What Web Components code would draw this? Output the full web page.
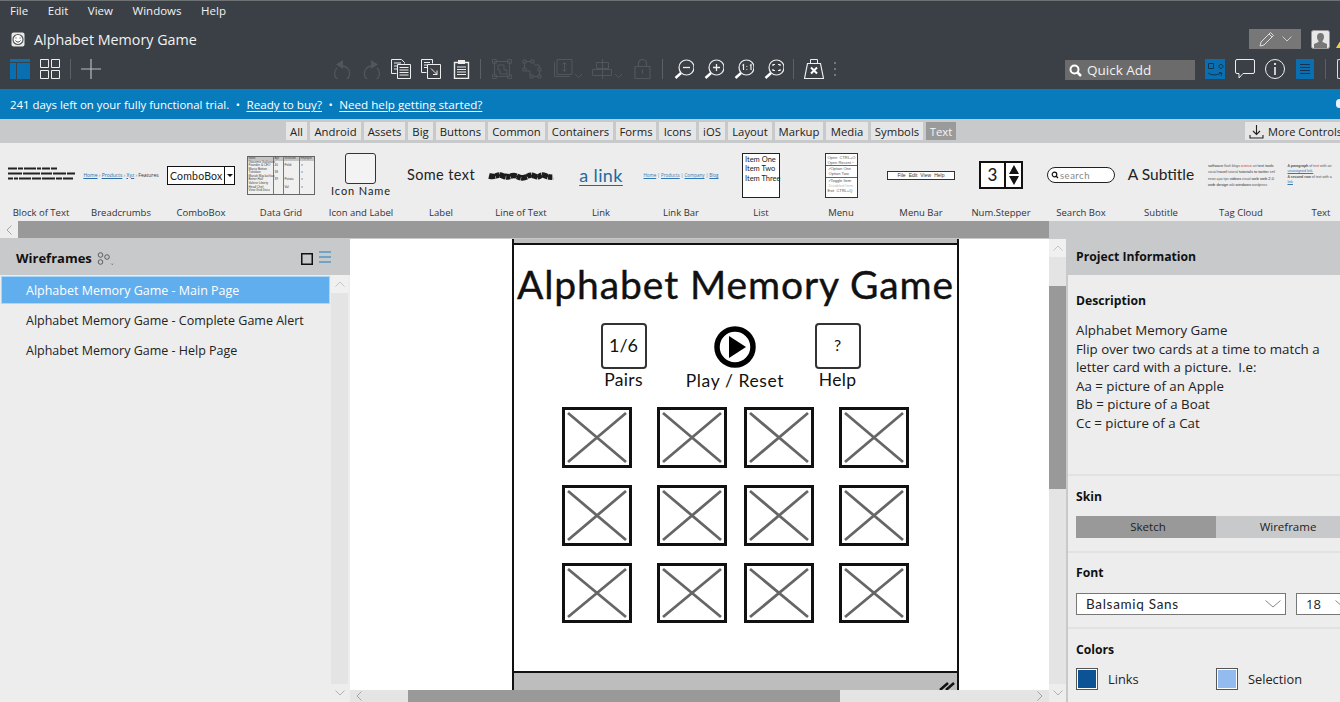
<!DOCTYPE html>
<html>
<head>
<meta charset="utf-8">
<title>Alphabet Memory Game</title>
<style>
  html, body { margin: 0; height: 100%; overflow: hidden; }
  body { font-family: "Open Sans", "Liberation Sans", sans-serif; font-size: 12.5px; color: #222; }
</style>
</head>
<body>
<bm-app></bm-app>

<script>
const DIM = '#50565b';
const svg = (w, h, body) => `<svg width="${w}" height="${h}" viewBox="0 0 ${w} ${h}" fill="none" style="display:block;flex:none">${body}</svg>`;

const ICONS = {
  layout: svg(20, 20, `<rect width="20" height="20" fill="#0a6fb0"/><path d="M0 3.5H20M6.5 3.5V20" stroke="#3a4046"/>`),
  grid: svg(20, 20, `<path d="M.5.5h8v8h-8zM11.5.5h8v8h-8zM.5 11.5h8v8h-8zM11.5 11.5h8v8h-8z" stroke="#eee"/>`),
  plus: svg(20, 20, `<path d="M10 0V20M0 10H20" stroke="#b8bbbd" stroke-width="1.2"/>`),
  undo: svg(18, 20, `<path d="M4 9a7.5 7.5 0 1 0 5-2" stroke="${DIM}" stroke-width="1.3"/><path d="M10 1v9L3 5.5z" fill="${DIM}"/>`),
  redo: svg(18, 20, `<path d="M14 9a7.5 7.5 0 1 1-5-2" stroke="${DIM}" stroke-width="1.3"/><path d="M8 1v9l7-4.5z" fill="${DIM}"/>`),
  copy: svg(20, 20, `<path d="M.5.5h10l3 3v1M.5.5v14h5" stroke="#eee"/><path d="M3 4h7M3 7h3M3 10h3" stroke="#eee"/><path d="M6.500 5.500h13v14h-13z" fill="#3a4046" stroke="#eee"/><path d="M8.500 8.500h9M8.500 11h9M8.500 13.500h9M8.500 16h9" stroke="#eee"/>`),
  paste: svg(20, 20, `<path d="M.5.500h11v4M.5.500v13h5M3 3.500h6M3 6h3M3 8.500h3" stroke="#eee"/><path d="M6.500 5.500h13v14h-13z" stroke="#eee"/><path d="M10 9.500l6 6M16 11.500v4h-4" stroke="#eee"/>`),
  clipboard: svg(17, 20, `<path d="M1.500 3.500h14v16h-14z" stroke="#eee" stroke-width="1.400"/><path d="M5 1h7v4H5z" fill="#eee"/><path d="M4 8h9M4 10.500h9M4 13h9M4 15.500h9" stroke="#eee"/>`),
  group: svg(20, 20, `<path d="M2.500 2.500h15v15h-15z" stroke="${DIM}"/><path d="M0 0h4v4H0zM16 0h4v4h-4zM0 16h4v4H0zM16 16h4v4h-4z" stroke="${DIM}" transform="translate(.5 .5) scale(.95)"/><path d="M6 6h6v5h3v4H8v-4H6z" stroke="${DIM}"/>`),
  ungroup: svg(20, 20, `<path d="M1 1h3v3H1zM9 1h3v3H9zM1 9h3v3H1zM16 9h3v3h-3zM8 16h3v3H8zM16 16h3v3h-3z" stroke="${DIM}"/><path d="M4 2.500h5M2.500 4v5M12 6h5v3M4 12h4v4M11 17.500h5M17.500 12v4" stroke="${DIM}"/>`),
  arrange: svg(30, 20, `<path d="M5 .5h15v15H5zM2.500 3v14.500H18" stroke="${DIM}"/><path d="M12.500 3.500v9M10.500 5.500l2-2 2 2M10.500 10.500l2 2 2-2" stroke="${DIM}"/><path d="M23 15l3.500 3.500L30 15" stroke="${DIM}"/>`),
  align: svg(30, 20, `<path d="M10.500 0v20M4.500 3.500h12v6h-12zM.5 10.500h19v6H.5z" stroke="${DIM}"/><path d="M23 15l3.500 3.500L30 15" stroke="${DIM}"/>`),
  lock: svg(17, 20, `<path d="M1 7.500h15v12H1zM4.500 7.500V4a4 3.500 0 0 1 8 0v3.500M8.500 10.500v4" stroke="${DIM}" stroke-width="1.200"/>`),
  zoomOut: mag(`<path d="M9 8.500h7" stroke="#eee" stroke-width="1.300"/>`),
  zoomIn: mag(`<path d="M9 8.500h7M12.500 5v7" stroke="#eee" stroke-width="1.300"/>`),
  zoomOne: mag(`<path d="M8.500 6.500l1-.8V11M16 6.500l1-.8V11M12.800 7v.8M12.800 10v.8" stroke="#eee" stroke-width="1.200"/>`),
  zoomFit: mag(`<path d="M9 7V5.500h2M14 5.500h2V7M16 10v1.500h-2M11 11.500H9V10" stroke="#eee" stroke-width="1.200"/>`),
  clear: svg(20, 20, `<path d="M3.500 4.500h13l3 15H.5z" stroke="#eee" stroke-width="1.200"/><path d="M6.500.5h7v4h-7z" stroke="#eee"/><path d="M7 8.500l6 6M13 8.500l-6 6" stroke="#fff" stroke-width="2"/>`),
  dots: svg(4, 16, `<path d="M2 1v2M2 7v2M2 13v2" stroke="#777" stroke-width="2"/>`),
  search: svg(13, 13, `<circle cx="5.500" cy="5.500" r="4" stroke="#fff" stroke-width="2"/><path d="M8.500 8.500l3.500 3.500" stroke="#fff" stroke-width="2.500"/>`),
  amazon: svg(20, 20, `<rect width="20" height="20" fill="#0a6fb0"/><path d="M3.500 4.500h5v5h-5zM16 5.500a2 2 0 1 1-.1 0" stroke="#17324a"/><path d="M3 14c4 2.500 9 2.500 13 0M14 13.500l3 .5-1 3" stroke="#17324a"/>`),
  chat: svg(20, 20, `<path d="M2 .5h16a1.500 1.500 0 0 1 1.500 1.500v11a1.500 1.500 0 0 1-1.500 1.500H8l-4 4.500v-4.500H2A1.500 1.500 0 0 1 .5 13V2A1.500 1.500 0 0 1 2 .5z" stroke="#eee"/>`),
  info: svg(20, 20, `<circle cx="10" cy="10" r="9.500" stroke="#eee"/><path d="M10 8v8" stroke="#eee" stroke-width="1.600"/><path d="M10 4v2" stroke="#eee" stroke-width="1.800"/>`),
  lines: svg(18, 20, `<rect width="18" height="20" fill="#0a6fb0"/><path d="M4 5.500h10M4 8.500h10M4 11.500h10M4 14.500h10" stroke="#17324a"/>`),
  logo: svg(14, 15, `<rect x=".5" y=".5" width="13" height="14" rx="2" fill="#e8e8e8"/><circle cx="7" cy="7.500" r="5" fill="#fff" stroke="#555" stroke-width="1.200"/><path d="M4.500 8.500c1.500 2 3.500 2 5 0M5 5.500v1M9 5.500v1" stroke="#333"/>`),
  pencil: svg(16, 16, `<path d="M1 15l1-4L11.500 1.500l3 3L5 14z" stroke="#ddd"/><path d="M10 3l3 3" stroke="#ddd"/>`),
  avatar: svg(19, 19, `<rect x=".5" y=".5" width="18" height="18" rx="2" fill="#e8e8e8" stroke="#999"/><path d="M6 7a3.500 4 0 0 1 7 0c0 2-1 3-1.500 4v1l4.500 2v4H3v-4l4.500-2v-1C7 10 6 9 6 7z" fill="#777"/>`),
  download: svg(15, 15, `<path d="M7.500 1v9M4 7l3.500 3.500L11 7M1 11v3h13v-3" stroke="#222" stroke-width="1.100"/>`),
  branch: svg(18, 14, `<circle cx="3.500" cy="3" r="2.300" stroke="#444" stroke-width=".8"/><circle cx="3.500" cy="10" r="2.300" stroke="#444" stroke-width=".8"/><circle cx="10" cy="5" r="2.300" stroke="#444" stroke-width=".8"/><path d="M14 11.500l1.200 1.200 1.200-1.200" stroke="#666" stroke-width=".7"/>`),
  square: svg(12, 12, `<path d="M.75.750h10.500v10.500H.75z" stroke="#111" stroke-width="1.500"/>`),
  listBlue: svg(12, 12, `<path d="M0 1h12M0 6h12M0 11h12" stroke="#1a7fc0" stroke-width="1.200"/>`),
  caretUp: svg(10, 6, `<path d="M.5 5.500L5 1l4.500 4.500" stroke="#c4c4c4"/>`),
  caretDown: svg(10, 6, `<path d="M.5.5L5 5 9.500.5" stroke="#b0b0b0"/>`),
  caretLeft: svg(6, 10, `<path d="M5.500.5L1 5l4.500 4.500" stroke="#a4a4a4"/>`),
  caretRight: svg(6, 10, `<path d="M.5.5L5 5 .5 9.500" stroke="#a4a4a4"/>`),
  chevron: svg(16, 8, `<path d="M.5.500L8 7 15.500.500" stroke="#888"/>`),
  chevronLight: svg(10, 6, `<path d="M.5.500L5 5 9.500.500" stroke="#ccc"/>`)
};
function mag(inner) {
  return svg(20, 20, `<circle cx="12.500" cy="8.500" r="7.500" stroke="#eee" stroke-width="1.200"/><path d="M7 14L1.500 19" stroke="#fff" stroke-width="2.400"/>${inner}`);
}

// registers a custom element whose shadow root holds the given style + markup
function define(name, css, html) {
  customElements.define(name, class extends HTMLElement {
    connectedCallback() {
      if (this.shadowRoot) return;
      const root = this.attachShadow({ mode: 'open' });
      root.innerHTML = `<style>${css}</style>` + (typeof html == 'function' ? html(this) : html);
    }
  });
}

define('bm-icon', `:host{display:block;flex:none;line-height:0}`, el => ICONS[el.getAttribute('name')]);

define('bm-app', `
  :host{display:flex;flex-direction:column;width:1340px;height:702px;overflow:hidden;background:#ededed}
  .main{flex:1;min-height:0;display:flex}
  bm-titlebar,bm-banner,bm-tabs,bm-gallery,bm-galleryscroll{flex:none}
`, `
  <bm-titlebar></bm-titlebar>
  <bm-banner></bm-banner>
  <bm-tabs></bm-tabs>
  <bm-gallery></bm-gallery>
  <bm-galleryscroll></bm-galleryscroll>
  <div class="main">
    <bm-wireframes></bm-wireframes>
    <bm-canvas></bm-canvas>
    <bm-inspector></bm-inspector>
  </div>
`);

define('bm-titlebar', `
  :host{display:block;height:89px;box-sizing:border-box;background:#3a4046;border-top:1px solid #6f7275;color:#f2f2f2;font-size:11.500px;overflow:hidden}
  .menu{display:flex;height:19px;padding-left:10px;gap:19.600px;align-items:center}
  .name{display:flex;align-items:center;height:20px;margin-top:9px;padding-left:11px}
  .name b{font-weight:400;font-size:14.300px;margin-left:9px;flex:1}
  .pen{display:flex;align-items:center;justify-content:center;gap:7px;width:52px;height:20px;background:#777}
  .warn{width:0;height:0;border-left:6px solid transparent;border-right:6px solid transparent;border-bottom:10px solid #f4cf3c;margin:8px -8px 0 6px}
  .tools{display:flex;align-items:center;height:20px;margin-top:10px;padding-left:10px}
  .tools > *{flex:none}
  .group{display:flex;align-items:center;gap:10px}
  .sep{width:1px;height:20px;background:#5a6065;margin:0 10px}
  .quick{display:flex;align-items:center;gap:5px;box-sizing:border-box;width:130px;height:20px;padding-left:4px;background:#6b6b6b;font-size:13.500px;margin-top:2px}
  .stub{width:12px;height:20px;box-sizing:border-box;border:1px solid #ddd;border-right:0;border-radius:2px 0 0 2px}
`, `
  <div class="menu"><span>File</span><span>Edit</span><span>View</span><span>Windows</span><span>Help</span></div>
  <div class="name">
    <bm-icon name="logo"></bm-icon><b>Alphabet Memory Game</b>
    <div class="pen"><bm-icon name="pencil"></bm-icon><bm-icon name="chevronLight"></bm-icon></div>
    <bm-icon name="avatar" style="margin-left:10px"></bm-icon>
    <div class="warn"></div>
  </div>
  <div class="tools">
    <div class="group"><bm-icon name="layout"></bm-icon><bm-icon name="grid"></bm-icon></div>
    <div class="sep"></div>
    <bm-icon name="plus"></bm-icon>
    <div class="group" style="margin-left:232px;gap:12px">
      <bm-icon name="undo"></bm-icon><bm-icon name="redo"></bm-icon>
      <bm-icon name="copy" style="margin-left:-2px"></bm-icon><bm-icon name="paste" style="margin-left:-2px"></bm-icon><bm-icon name="clipboard"></bm-icon>
    </div>
    <div class="sep" style="margin:0 11px 0 10px"></div>
    <div class="group">
      <bm-icon name="group"></bm-icon><bm-icon name="ungroup"></bm-icon><bm-icon name="arrange"></bm-icon><bm-icon name="align"></bm-icon>
      <bm-icon name="lock" style="margin-left:2px"></bm-icon>
    </div>
    <div class="sep" style="margin:0 11px"></div>
    <div class="group"><bm-icon name="zoomOut"></bm-icon><bm-icon name="zoomIn"></bm-icon><bm-icon name="zoomOne"></bm-icon><bm-icon name="zoomFit"></bm-icon></div>
    <div class="sep" style="margin:0 10px 0 9px"></div>
    <bm-icon name="clear"></bm-icon>
    <bm-icon name="dots" style="margin-left:9px"></bm-icon>
    <div class="quick" style="margin-left:228px"><bm-icon name="search"></bm-icon><span>Quick Add</span></div>
    <div class="group" style="margin-left:10px">
      <bm-icon name="amazon"></bm-icon><bm-icon name="chat"></bm-icon><bm-icon name="info"></bm-icon>
      <bm-icon name="lines" style="margin-left:1px"></bm-icon>
    </div>
    <div class="sep" style="margin:0 11px"></div>
    <div class="stub"></div>
  </div>
`);

define('bm-banner', `
  :host{display:flex;align-items:center;height:30px;box-sizing:border-box;padding:1px 0 0 10px;gap:6.500px;background:#087bbd;color:#fff;font-size:11.400px;white-space:nowrap;position:relative}
  a{color:#fff;font-size:11.650px;text-decoration:underline;text-underline-offset:2px}
  i{position:absolute;right:-3px;top:10px;width:7px;height:9px;border-radius:4px;background:#e3f3fb}
`, `<span>241 days left on your fully functional trial.</span><span>•</span><a>Ready to buy?</a><span>•</span><a>Need help getting started?</a><i></i>`);

const TABS = [['All',21],['Android',51],['Assets',41],['Big',25],['Buttons',49],['Common',57],['Containers',65],['Forms',40],['Icons',37],['iOS',26],['Layout',44],['Markup',48],['Media',42],['Symbols',52]];
define('bm-tabs', `
  :host{display:flex;align-items:flex-start;height:24px;padding:3px 0 0 286px;box-sizing:border-box;background:#c8c9ca;font-size:11.300px;white-space:nowrap;overflow:hidden}
  span{display:block;flex:none;height:18px;line-height:19px;margin-right:3px;background:#e6e6e6;text-align:center;color:#222}
  .on{background:#9a9a9a;color:#f4f4f4;width:30px}
  .more{display:flex;align-items:center;gap:4px;margin:0 0 0 286px;padding-left:4px;width:110px;text-align:left;background:#e6e6e6;font-size:11.100px}
`, TABS.map(t => `<span style="width:${t[1]}px">${t[0]}</span>`).join('') +
   `<span class="on">Text</span><span class="more"><bm-icon name="download"></bm-icon>More Controls</span>`);

define('bm-gallery', `
  :host{display:grid;grid-template-columns:repeat(17,80px);height:78px;padding-left:1px;background:#ededed;overflow:hidden}
`, `
  <bm-item label="Block of Text"><svg width="68" height="16" style="margin-top:-2px"><g stroke="#222" stroke-width="2" fill="none"><path d="M1 2.500h57" stroke-dasharray="9 1 5 1 12 1 4 1 8 1 6"/><path d="M1 7.500h67" stroke-dasharray="14 1 17 1 11 1 13 1 8"/><path d="M1 12.500h66" stroke-dasharray="5 1 4 1 12 1 9 1 13 1 6 1 10"/></g></svg></bm-item>
  <bm-item label="Breadcrumbs"><span style="font-size:5px;color:#2a6fa8;white-space:nowrap"><u>Home</u> › <u>Products</u> › <u>Xyz</u> › <span style="color:#333">Features</span></span></bm-item>
  <bm-item label="ComboBox"><mock-combo></mock-combo></bm-item>
  <bm-item label="Data Grid"><mock-grid></mock-grid></bm-item>
  <bm-item label="Icon and Label"><mock-iconlabel></mock-iconlabel></bm-item>
  <bm-item label="Label"><span style="font-family:Lato,sans-serif;font-size:14.500px;color:#222;letter-spacing:.4px">Some text</span></bm-item>
  <bm-item label="Line of Text"><svg width="66" height="12" style="margin-top:4px"><path d="M1 5c8 2 8-3 14 0s8-2 13 0 7 3 12 0 8 3 12 0 6 2 13 1" stroke="#1c1c1c" stroke-width="5.500" stroke-dasharray="6 .5 4 .5" fill="none"/><path d="M2 3.500l8 1 8-1 10 2 12-1 10 1 12-.5" stroke="#1c1c1c" stroke-width="2" fill="none"/></svg></bm-item>
  <bm-item label="Link"><u style="font-family:Lato,sans-serif;font-size:18px;color:#1d6a9f;text-underline-offset:3px;letter-spacing:.4px">a link</u></bm-item>
  <bm-item label="Link Bar"><span style="font-size:4.500px;color:#3278b4;white-space:nowrap"><u>Home</u> | <u>Products</u> | <u>Company</u> | <u>Blog</u></span></bm-item>
  <bm-item label="List"><mock-list></mock-list></bm-item>
  <bm-item label="Menu"><mock-menu></mock-menu></bm-item>
  <bm-item label="Menu Bar"><mock-menubar></mock-menubar></bm-item>
  <bm-item label="Num.Stepper"><mock-stepper></mock-stepper></bm-item>
  <bm-item label="Search Box"><mock-search></mock-search></bm-item>
  <bm-item label="Subtitle"><span style="font-family:Lato,sans-serif;font-size:15.500px;color:#222;white-space:nowrap">A Subtitle</span></bm-item>
  <bm-item label="Tag Cloud"><mock-tags></mock-tags></bm-item>
  <bm-item label="Text"><mock-para></mock-para></bm-item>
`);

define('bm-item', `
  :host{display:flex;flex-direction:column;width:80px;overflow:visible}
  .pv{height:62px;box-sizing:border-box;padding-top:2px;display:flex;align-items:center;justify-content:center;color:#222;line-height:1}
  .lb{height:16px;line-height:16px;font-size:9.500px;text-align:center;color:#333;white-space:nowrap}
`, el => `<div class="pv"><slot></slot></div><div class="lb">${el.getAttribute('label')}</div>`);

const SKETCH = 'Lato, "Noto Sans", sans-serif';
define('mock-combo', `
  :host{display:flex;box-sizing:border-box;width:68px;height:19px;margin-top:1px;border:1.500px solid #111;background:#fff;font:10.500px ${SKETCH};align-items:center;padding-left:2px;letter-spacing:.2px}
  span{flex:1}
  i{width:9px;height:100%;border-left:1.500px solid #111;display:flex;align-items:center;justify-content:center;font-style:normal}
  i:after{content:"";border-left:3px solid transparent;border-right:3px solid transparent;border-top:3px solid #111}
`, `<span>ComboBox</span><i></i>`);

define('mock-grid', `
  :host{display:grid;grid-template-columns:26px 10px 16px 14px;grid-template-rows:4px 1fr;box-sizing:border-box;width:68px;height:39px;border:1px solid #666;background:#f0f0f0;font:3.100px/3.600px "Liberation Sans",sans-serif;color:#444;white-space:nowrap}
  div{border-right:1px solid #777;padding:0 .5px}
  div:last-child{border:0}
  .h{background:#c4c4c4;font-size:2.600px;line-height:4px}
`, `
  <div class="h">Name</div><div class="h">Age</div><div class="h">Nickname</div><div class="h" style="border:0">Employee</div>
  <div>Giacomo Guilizzoni<br>Founder &amp; CEO<br>Marco Botton<br>Tuttofare<br>Mariah Maclachlan<br>Better Half<br>Valerie Liberty<br>Head Chef<br>View Grid Docs</div>
  <div><br>40<br><br>38<br><br>39<br></div>
  <div><br>Peldi<br><br><br><br>Patata<br><br>Val</div>
  <div><br>&nbsp;v<br><br>&nbsp;v<br><br>&nbsp;v<br><br>&nbsp;v</div>
`);

define('mock-iconlabel', `
  :host{display:flex;flex-direction:column;align-items:center;font:11px ${SKETCH};color:#222;letter-spacing:.9px;white-space:nowrap}
  i{display:block;box-sizing:border-box;width:31px;height:31px;border:1.500px solid #333;border-radius:3px;background:#f3f3f3}
`, `<i></i><span>Icon Name</span>`);

define('mock-list', `
  :host{display:block;box-sizing:border-box;width:38px;height:45px;border:1.500px solid #222;background:#fff;padding:1px 2px;font:7.500px/9.500px ${SKETCH};color:#222;white-space:nowrap}
`, `Item One<br>Item Two<br>Item Three`);

define('mock-menu', `
  :host{display:block;box-sizing:border-box;width:33px;height:45px;border:1px solid #333;background:#fff;font:4px/5.300px "Liberation Sans",sans-serif;color:#555;padding:1px 2px;white-space:nowrap}
  hr{border:0;border-top:1px solid #666;margin:0 -2px}
`, `Open &nbsp;CTRL+O<br>Open Recent ›<hr>✓Option One<br>&nbsp;Option Two<hr>✓Toggle Item<br><span style="color:#bbb">&nbsp;Disabled Item</span><br>Exit &nbsp;CTRL+Q`);

define('mock-menubar', `
  :host{display:flex;box-sizing:border-box;width:68px;height:9px;border:1px solid #333;background:#fff;font:5px/7px "Liberation Sans",sans-serif;color:#333;justify-content:space-around;padding:0 8px;white-space:nowrap}
`, `<span>File</span><span>Edit</span><span>View</span><span>Help</span>`);

define('mock-stepper', `
  :host{display:flex;box-sizing:border-box;width:44px;height:28px;margin-top:-1px;border:2px solid #111;background:#fff;font:bold 17px ${SKETCH}}
  b{flex:1;display:flex;align-items:center;justify-content:center;font-weight:500}
  i{display:flex;flex-direction:column;align-items:center;justify-content:center;gap:2px;width:15px;border-left:2px solid #111}
  i:before{content:"";border-left:5px solid transparent;border-right:5px solid transparent;border-bottom:9px solid #111}
  i:after{content:"";border-left:5px solid transparent;border-right:5px solid transparent;border-top:9px solid #111}
`, `<b>3</b><i></i>`);

define('mock-search', `
  :host{display:flex;align-items:center;gap:1px;box-sizing:border-box;width:68px;height:16px;padding-left:3px;border:1.500px solid #222;border-radius:8px;background:#fff;font:9.500px ${SKETCH};color:#888;letter-spacing:.5px}
  svg{flex:none}
`, `<svg width="8" height="8"><circle cx="3.500" cy="3.500" r="2.300" stroke="#111" stroke-width="1.200" fill="none"/><path d="M5 5l2 2" stroke="#111" stroke-width="1.300"/></svg><span>search</span>`);

define('mock-tags', `
  :host{display:block;width:66px;margin-top:1px;font:3.300px/5.200px "Liberation Sans",sans-serif;color:#555;white-space:nowrap}
  b{font-weight:400;color:#333;font-size:4px}
`, `<b>software</b> flash blogs <span style="color:#c33">science</span> art <b>text tools</b><br>social <b>travel</b> tutorial <b>tutorials to</b> <b>twitter</b> xml<br>news ajax tips <b>videos</b> visual <b>web web 2.0</b><br><b>web design</b> wiki <b>windows</b> wordpress`);

define('mock-para', `
  :host{display:block;width:53px;margin:-1px 0 0 -14px;font:3.600px/5.500px "Liberation Sans",sans-serif;color:#555;white-space:nowrap}
  u{color:#3278b4}
`, `A <b>paragraph</b> of <span style="color:#c33">text</span> with an<br><u>unassigned link.</u><br>A <b>second row</b> of text with a<br><u>link</u>`);

define('bm-galleryscroll', `
  :host{display:flex;height:18px;box-sizing:border-box;background:#c8c9ca;align-items:stretch;padding-bottom:1px}
  .arrow{width:18px;display:flex;align-items:center;justify-content:center;background:#ededed}
  .thumb{width:1031px;background:#999}
`, `<div class="arrow"><bm-icon name="caretLeft"></bm-icon></div><div class="thumb"></div>`);

define('bm-wireframes', `
  :host{display:flex;flex-direction:column;width:350px;flex:none;background:#ededed}
  .head{display:flex;align-items:center;height:36px;padding:1px 0 0 16px;background:#c8c9ca;box-sizing:border-box;font-weight:700;font-size:13px;color:#111}
  .head bm-icon:first-of-type{margin:2px 0 0 5px}
  .head .r{margin-left:auto;display:flex;gap:6px;padding-right:19px}
  .body{flex:1;display:flex;min-height:0}
  .list{flex:1;min-width:0;padding:0 2px}
  .row{display:block;height:30px;line-height:31px;padding-left:24px;white-space:nowrap;font-size:12.500px;color:#222}
  .row.sel{height:26px;line-height:28px;margin:2px 0;background:#60aeee;color:#fff;box-shadow:0 0 0 1px #aed7f5}
`, `
  <div class="head"><span>Wireframes</span><bm-icon name="branch"></bm-icon><div class="r"><bm-icon name="square"></bm-icon><bm-icon name="listBlue"></bm-icon></div></div>
  <div class="body">
    <div class="list">
      <span class="row sel">Alphabet Memory Game - Main Page</span>
      <span class="row">Alphabet Memory Game - Complete Game Alert</span>
      <span class="row">Alphabet Memory Game - Help Page</span>
    </div>
    <bm-vscroll style="width:17px;margin-right:2px" thumb="0"></bm-vscroll>
  </div>
`);

define('bm-vscroll', `
  :host{display:flex;flex-direction:column;flex:none;background:#e4e4e4}
  .a{height:18px;display:flex;align-items:center;justify-content:center;background:#f0f0f0;flex:none}
  .b{background:#ededed}
  .g{flex:1}
  .t{background:#999;flex:none}
`, el => {
  const t = +el.getAttribute('thumb'), top = +el.getAttribute('top') || 0;
  return `<div class="a"><bm-icon name="caretUp"></bm-icon></div>` +
    (t ? `<div style="height:${top}px;flex:none"></div><div class="t" style="height:${t}px"></div>` : '') +
    `<div class="g"></div><div class="a b"><bm-icon name="caretDown"></bm-icon></div>`;
});

define('bm-canvas', `
  :host{display:grid;grid-template-columns:699px 17px;grid-template-rows:451px 12px;width:716px;flex:none;background:#fff}
  .view{overflow:hidden;position:relative;background:#fff}
  .h{position:relative;display:flex;grid-column:1;background:#e4e4e4;align-items:center;justify-content:space-between}
  .h .t{position:absolute;left:58px;top:0;bottom:0;width:432px;background:#999}
  .h bm-icon{margin:0 6px}
`, `
  <div class="view"><wire-window></wire-window></div>
  <bm-vscroll thumb="203" top="29" style="grid-row:1/3;grid-column:2"></bm-vscroll>
  <div class="h"><bm-icon name="caretLeft"></bm-icon><div class="t"></div><bm-icon name="caretRight"></bm-icon></div>
`);

// free canvas: the mockup drawn in the editor, items sit at their place on it
define('wire-window', `
  :host{display:block;position:absolute;left:162px;top:-1px;width:447px;height:453px;box-sizing:border-box;border-left:2.500px solid #111;border-right:2.500px solid #111;font-family:${SKETCH};color:#111}
  .top{background:#bdbdbd;border-bottom:2px solid #111;height:5px}
  h1{position:absolute;left:0;right:0;top:23px;margin:0;text-align:center;font-size:39px;line-height:46px;font-weight:400;letter-spacing:.9px;white-space:nowrap;-webkit-text-stroke:.4px #111}
  .foot{position:absolute;left:0;right:0;top:433px;height:20px;background:#bdbdbd;border-top:2.500px solid #111;box-sizing:border-box}
  .foot svg{position:absolute;right:0;top:3px}
  .play{position:absolute;left:200px;top:88px}
`, `
  <div class="top"></div>
  <h1>Alphabet Memory Game</h1>
  <wire-button style="left:86.500px;top:85px" label="Pairs" value="1/6"></wire-button>
  <svg class="play" width="42" height="42"><circle cx="21" cy="21" r="18" stroke="#000" stroke-width="5.500" fill="#fff"/><path d="M15 10v22l17-11z" fill="#000"/></svg>
  <wire-label style="left:171px;top:132px;width:100px;letter-spacing:.6px">Play / Reset</wire-label>
  <wire-button style="left:300.500px;top:85px" label="Help" value="?" small></wire-button>
  ${[[407, 61],[485, 61],[563, 60]].map(r => [562, 657, 744, 839].map(x =>
    `<wire-card style="left:${x - 514.5}px;top:${r[0] - 238}px;height:${r[1]}px"></wire-card>`).join('')).join('')}
  <div class="foot"><svg width="20" height="16"><path d="M3 14l8-7M9 14l8-7" stroke="#111" stroke-width="2.500"/></svg></div>
`);

define('wire-button', `
  :host{display:block;position:absolute;width:46px;text-align:center}
  .box{box-sizing:border-box;width:46px;height:46px;border:2px solid #333;border-radius:4px;display:flex;align-items:center;justify-content:center;font-size:18px;padding-bottom:2px;background:#fff}
  .lb{font-size:17.500px;line-height:22px;margin:0 -20px;white-space:nowrap;letter-spacing:.3px}
`, el => `<div class="box" ${el.hasAttribute('small') ? 'style="font-size:16px;padding-bottom:4px"' : ''}>${el.getAttribute('value')}</div><div class="lb">${el.getAttribute('label')}</div>`);

define('wire-label', `:host{display:block;position:absolute;text-align:center;font-size:17.500px;line-height:22px;white-space:nowrap}`, `<slot></slot>`);

define('wire-card', `
  :host{display:block;position:absolute;width:70px;box-sizing:border-box;border:3px solid #111;background:#fff}
  svg{display:block;width:100%;height:100%}
`, `<svg viewBox="0 0 64 55" preserveAspectRatio="none"><path d="M3 3l58 49M61 3L3 52" stroke="#666" stroke-width="2.800" fill="none"/></svg>`);

define('bm-inspector', `
  :host{display:block;flex:1;min-width:0;box-sizing:border-box;border-left:2px solid #c8c9ca;background:#ededed;overflow:hidden;white-space:nowrap;font-size:13.300px;color:#222}
  .head{height:36px;margin-left:-2px;padding-left:10px;line-height:36px;background:#c8c9ca;font-weight:700;font-size:12.200px;color:#111}
  section{padding:0 0 0 8px;border-bottom:2px solid #e2e2e2}
  h3{margin:0;font-size:12.200px;font-weight:700;color:#111}
  .desc{height:201px;padding-top:17px;box-sizing:border-box}
  .desc p{margin:12px 0 0;line-height:18.600px}
  .skin{height:77px;box-sizing:border-box;padding-top:12px}
  .seg{display:flex;margin-top:11px;height:22px;line-height:22px;text-align:center;width:300px;font-size:11.500px}
  .seg span{width:140px;box-sizing:border-box;padding-left:4px;background:#c8c9ca}
  .seg .on{background:#999}
  .font{height:76px;box-sizing:border-box;padding-top:11px}
  .row{display:flex;gap:10px;margin-top:12px;width:300px}
  .sel{display:flex;align-items:center;justify-content:space-between;box-sizing:border-box;width:210px;height:22px;padding:0 4px 1px 9px;background:#fff;border:1px solid #777;font-family:Lato,sans-serif;font-size:13.500px;letter-spacing:.7px;flex:none}
  .sel.n{width:60px;padding-right:6px;font-family:inherit;font-size:13px;letter-spacing:0;justify-content:flex-start;gap:14px}
  .colors{padding-top:12px;border:0}
  .sw{display:flex;margin-top:10px;width:300px}
  .sw div{display:flex;align-items:center;width:140px;gap:10px;font-size:12.800px}
  .sw i{display:block;box-sizing:border-box;width:22px;height:22px;border:1px solid #555;outline:0;box-shadow:inset 0 0 0 1px #fff}
`, `
  <div class="head">Project Information</div>
  <section class="desc">
    <h3>Description</h3>
    <p>Alphabet Memory Game<br>Flip over two cards at a time to match a<br>letter card with a picture.&nbsp; I.e:<br>Aa = picture of an Apple<br>Bb = picture of a Boat<br>Cc = picture of a Cat</p>
  </section>
  <section class="skin"><h3>Skin</h3><div class="seg"><span class="on">Sketch</span><span>Wireframe</span></div></section>
  <section class="font"><h3>Font</h3>
    <div class="row"><div class="sel">Balsamiq Sans<bm-icon name="chevron"></bm-icon></div><div class="sel n">18<bm-icon name="chevron"></bm-icon></div></div>
  </section>
  <section class="colors"><h3>Colors</h3>
    <div class="sw"><div><i style="background:#0b5394"></i>Links</div><div><i style="background:#93bbef"></i>Selection</div></div>
  </section>
`);
</script>
</body>
</html>
